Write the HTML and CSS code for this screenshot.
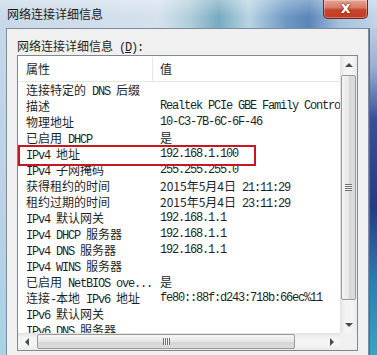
FILE: index.html
```html
<!doctype html>
<html lang="zh-CN">
<head>
	<meta charset="utf-8">
	<title>网络连接详细信息</title>
	<link rel="stylesheet" href="styles.css">
</head>
<body>
	<div class="window">
		<div class="titlebar">
			<span class="title">网络连接详细信息</span>
			<div class="close">x</div>
		</div>
		<div class="main">
			<div class="edge-l"></div>
			<div class="client">
				<div class="caption">网络连接详细信息<span class="m"> (<u>D</u>):</span></div>
				<div class="list">
					<div class="view">
						<div class="head"><div class="k">属性</div><div class="v">值</div></div>
						<div class="row"><div class="k">连接特定的<span class="m"> DNS </span>后缀</div><div class="v"></div></div>
						<div class="row"><div class="k">描述</div><div class="v m">Realtek PCIe GBE Family Controller</div></div>
						<div class="row"><div class="k">物理地址</div><div class="v m">10-C3-7B-6C-6F-46</div></div>
						<div class="row"><div class="k">已启用<span class="m"> DHCP</span></div><div class="v">是</div></div>
						<div class="row hl"><div class="k"><span class="m">IPv4 </span>地址</div><div class="v m">192.168.1.100</div></div>
						<div class="row"><div class="k"><span class="m">IPv4 </span>子网掩码</div><div class="v m">255.255.255.0</div></div>
						<div class="row"><div class="k">获得租约的时间</div><div class="v">2015年5月4日<span class="m"> 21:11:29</span></div></div>
						<div class="row"><div class="k">租约过期的时间</div><div class="v">2015年5月4日<span class="m"> 23:11:29</span></div></div>
						<div class="row"><div class="k"><span class="m">IPv4 </span>默认网关</div><div class="v m">192.168.1.1</div></div>
						<div class="row"><div class="k"><span class="m">IPv4 DHCP </span>服务器</div><div class="v m">192.168.1.1</div></div>
						<div class="row"><div class="k"><span class="m">IPv4 DNS </span>服务器</div><div class="v m">192.168.1.1</div></div>
						<div class="row"><div class="k"><span class="m">IPv4 WINS </span>服务器</div><div class="v"></div></div>
						<div class="row"><div class="k">已启用<span class="m"> NetBIOS ove...</span></div><div class="v">是</div></div>
						<div class="row"><div class="k">连接<span class="m">-</span>本地<span class="m"> IPv6 </span>地址</div><div class="v m">fe80::88f:d243:718b:66ec%11</div></div>
						<div class="row"><div class="k"><span class="m">IPv6 </span>默认网关</div><div class="v"></div></div>
						<div class="row"><div class="k"><span class="m">IPv6 DNS </span>服务器</div><div class="v"></div></div>
					</div>
					<div class="vscroll">
						<div class="arr"><i class="tri up"></i></div>
						<div class="thumb"><i class="grip"></i></div>
						<div class="gap"></div>
						<div class="arr"><i class="tri down"></i></div>
					</div>
					<div class="hscroll">
						<div class="arr"><i class="tri left"></i></div>
						<div class="thumb"><i class="grip"></i></div>
						<div class="gap"></div>
						<div class="arr"><i class="tri right"></i></div>
					</div>
					<div class="corner"></div>
				</div>
			</div>
			<div class="edge-r"></div>
		</div>
	</div>
</body>
</html>
```

FILE: styles.css
```css
* {
	box-sizing: border-box;
}
body {
	margin: 0;
	font-family: "Noto Sans CJK SC", sans-serif;
	font-size: 12px;
	color: #1f1f1f;
	background: #c9d9ea;
}
.m {
	font-family: "Liberation Mono", "Noto Sans CJK SC", monospace;
	letter-spacing: -1.2px;
}

/* window frame */
.window {
	width: 377px;
	height: 355px;
	overflow: hidden;
	display: flex;
	flex-direction: column;
}
.titlebar {
	height: 28px;
	flex: none;
	display: flex;
	justify-content: space-between;
	padding-left: 7px;
	background:
		linear-gradient(to bottom, rgba(255, 255, 255, 0.3), rgba(255, 255, 255, 0) 60%),
		linear-gradient(to right, #c9d8e8 0%, #d5e1ed 42%, #b3cfdc 50%, #76abbf 58%, #bad4e2 66%, #6d98c4 76%, #5a86b8 82%, #a6c0dc 90%, #c2d4e7 100%);
}
.title {
	line-height: 28px;
	color: #1b1b1b;
}
.close {
	width: 45px;
	height: 19px;
	margin-right: 9px;
	border: 1px solid #6a2a20;
	border-top: none;
	border-radius: 0 0 5px 5px;
	background: linear-gradient(to bottom, #e6a697, #d77a66 42%, #c6442b 55%, #c13b22);
	box-shadow: inset 0 0 0 1px rgba(255, 255, 255, 0.3);
	display: flex;
	align-items: center;
	justify-content: center;
	color: #fff;
	font: bold 15px "DejaVu Sans", sans-serif;
	text-shadow: 0 0 2px #5a160c, 0 0 1px #5a160c;
	line-height: 1;
	padding-bottom: 2px;
}
.main {
	flex: 1;
	display: grid;
	grid-template-columns: 6px 363px 8px;
}
.edge-l {
	background: linear-gradient(to bottom, #c6d7e8, #bcd1e5 55%, #a7d2e4);
}
.edge-r {
	border-left: 1px solid #5b6b80;
	background: linear-gradient(to bottom, #bccde1 0%, #9aaed4 12%, #34509c 28%, #233b88 55%, #2a7fb8 78%, #3aa3cb 100%);
}

/* dialog client */
.client {
	background: #f0f0f0;
	border: 1px solid #7d8ca0;
	border-bottom: none;
	padding: 9px 0 0 10px;
}
.caption {
	height: 17px;
	line-height: 16px;
}
.list {
	width: 341px;
	height: 296px;
	border: 1px solid #828790;
	background: #fff;
	display: grid;
	grid-template-columns: 322px 17px;
	grid-template-rows: 277px 17px;
}
.view {
	overflow: hidden;
}
.head {
	display: flex;
	height: 26px;
	padding-top: 1px;
	line-height: 24px;
	border-bottom: 1px solid #e6e6e6;
}
.head .k {
	border-right: 1px solid #e6e6e6;
}
.row {
	display: flex;
	height: 16px;
	line-height: 16px;
}
.k {
	width: 135px;
	flex: none;
	padding-left: 8px;
	white-space: nowrap;
	overflow: hidden;
}
.v {
	padding-left: 7px;
	white-space: nowrap;
}
.hl {
	position: relative;
}
.hl::after {
	content: "";
	position: absolute;
	left: 0;
	top: -1px;
	width: 234px;
	height: 17px;
	border: 2px solid #c8171f;
}

/* scrollbars */
.vscroll,
.hscroll {
	display: flex;
}
.vscroll {
	flex-direction: column;
	background: linear-gradient(to right, #e2e2e2, #f4f4f4 30%, #f4f4f4 70%, #e9e9e9);
}
.hscroll {
	background: linear-gradient(to bottom, #e2e2e2, #f4f4f4 30%, #f4f4f4 70%, #e9e9e9);
}
.arr {
	width: 17px;
	height: 17px;
	flex: none;
	display: flex;
	align-items: center;
	justify-content: center;
}
.gap {
	flex: 1;
}
.thumb {
	flex: none;
	border: 1px solid #9a9a9a;
	border-radius: 2px;
	display: flex;
	align-items: center;
	justify-content: center;
}
.vscroll .thumb {
	height: 225px;
	margin: 2px 1px 0;
	background: linear-gradient(to right, #f5f5f5, #e7e7e7 50%, #d6d6d6 51%, #dcdcdc);
}
.hscroll .thumb {
	width: 258px;
	margin: 1px 0 1px 2px;
	background: linear-gradient(to bottom, #f5f5f5, #e7e7e7 50%, #d6d6d6 51%, #dcdcdc);
}
.grip {
	display: block;
	width: 7px;
	height: 7px;
}
.vscroll .grip {
	background: repeating-linear-gradient(to bottom, #6e6e6e 0 1px, #f4f4f4 1px 2px);
}
.hscroll .grip {
	background: repeating-linear-gradient(to right, #6e6e6e 0 1px, #f4f4f4 1px 2px);
}
.tri {
	display: block;
	width: 0;
	height: 0;
	border: 4px solid transparent;
}
.tri.up {
	border-top: none;
	border-bottom: 4px solid #4a4a4a;
}
.tri.down {
	border-bottom: none;
	border-top: 4px solid #4a4a4a;
}
.tri.left {
	border-left: none;
	border-right: 4px solid #4a4a4a;
}
.tri.right {
	border-right: none;
	border-left: 4px solid #4a4a4a;
}
.corner {
	background: #f0f0f0;
}
```
